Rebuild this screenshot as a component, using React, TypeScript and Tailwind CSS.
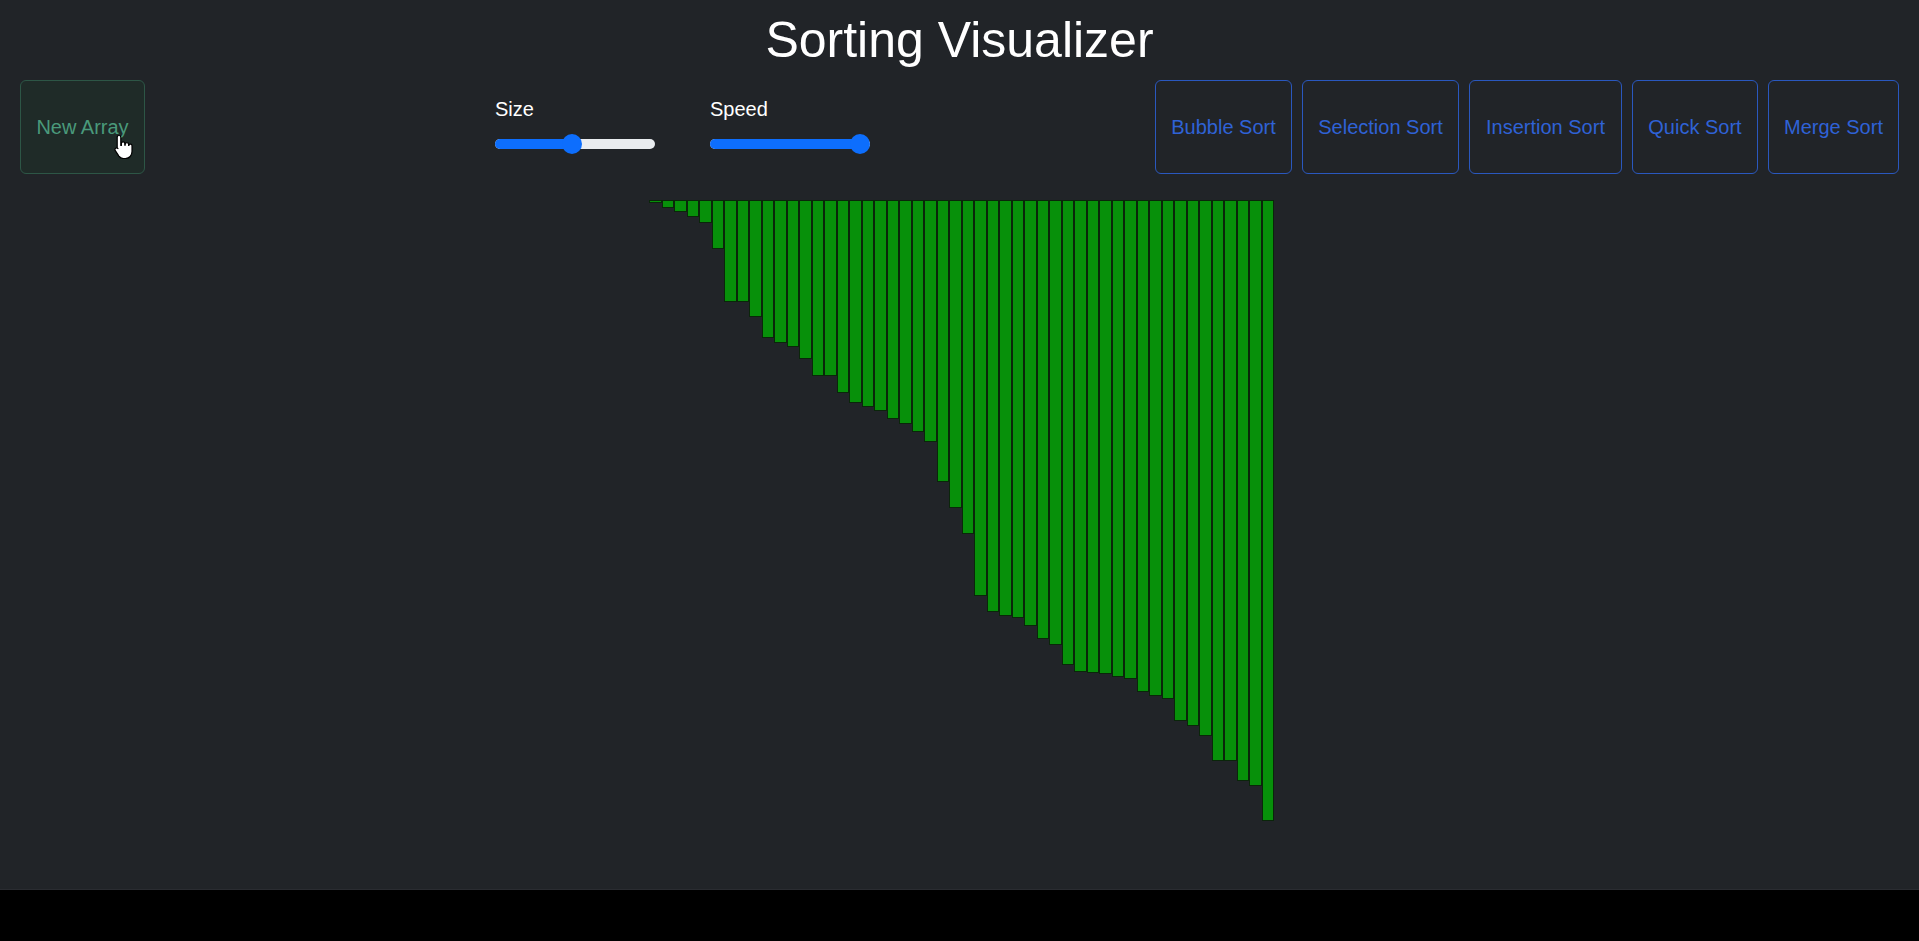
import React from "react";

const heights = [
  3, 8, 12, 17, 23, 49, 102, 102, 117, 138, 143, 147, 159, 176, 176, 193, 203,
  207, 211, 219, 224, 232, 242, 282, 308, 334, 396, 412, 416, 418, 426, 439,
  445, 465, 472, 473, 474, 477, 479, 492, 496, 499, 521, 526, 536, 561, 561,
  581, 586, 621,
];

const sorts = [
  { label: "Bubble Sort", w: "w-[137px]" },
  { label: "Selection Sort", w: "w-[157px]" },
  { label: "Insertion Sort", w: "w-[153px]" },
  { label: "Quick Sort", w: "w-[126px]" },
  { label: "Merge Sort", w: "w-[131px]" },
];

function Slider({ label, value }: { label: string; value: number }) {
  // value is 0..1, thumb travels inside the track
  const thumbLeft = 10 + value * 140;
  return (
    <div className="flex flex-col w-[160px] pt-[14px]">
      <span className="text-[20px] leading-[30px] text-white">{label}</span>
      <div className="relative h-[20px] mt-[10px]">
        <div className="absolute left-0 right-0 top-[5px] h-[10px] rounded-full bg-[#e9ecef] overflow-hidden">
          <div className="h-full bg-[#0d6efd]" style={{ width: thumbLeft }} />
        </div>
        <div
          className="absolute top-0 w-[20px] h-[20px] -ml-[10px] rounded-full bg-[#0d6efd]"
          style={{ left: thumbLeft }}
        />
      </div>
    </div>
  );
}

function HandCursor() {
  return (
    <svg
      width="20"
      height="25"
      viewBox="0 0 20 25"
      className="absolute left-[114px] top-[134px] pointer-events-none"
    >
      <path
        d="M5 1.5c1 0 1.8.8 1.8 1.8v8.2l.6-.1V9.6c0-1 .8-1.7 1.7-1.7s1.7.7 1.7 1.7v1.6h.4v-.9c0-1 .8-1.7 1.7-1.7s1.7.7 1.7 1.7v1.2h.3c0-.8.7-1.4 1.5-1.4s1.6.7 1.6 1.6v5.9c0 3.8-2.6 6.9-6.6 6.9H9.3c-2 0-3.3-.9-4.4-2.4L1.3 16.6c-.6-.8-.4-1.8.3-2.3.8-.6 1.8-.4 2.4.3l-.8-.6V3.3c0-1 .8-1.8 1.8-1.8z"
        fill="#ffffff"
        stroke="#000000"
        strokeWidth="1.2"
        strokeLinejoin="round"
      />
    </svg>
  );
}

export default function App() {
  return (
    <div
      className="h-screen bg-black overflow-hidden"
      style={{ fontFamily: '"Liberation Sans", Arial, sans-serif' }}
    >
      <div className="relative h-[890px] bg-[#212428] border-b border-[#2a2c31]">
        <h1 className="pt-[12px] text-center text-[50px] leading-[56px] text-white">
          Sorting Visualizer
        </h1>

        <div className="flex items-start mt-[12px] px-[20px] h-[94px]">
          <button className="w-[125px] h-[94px] flex items-center justify-center rounded-[6px] border border-[#2d5646] bg-[#1f2b28] text-[20px] text-[#4a9a7b]">
            New Array
          </button>

          <div className="flex gap-[55px] ml-[350px]">
            <Slider label="Size" value={0.48} />
            <Slider label="Speed" value={1} />
          </div>

          <div className="flex gap-[10px] ml-auto">
            {sorts.map((s) => (
              <button
                key={s.label}
                className={`${s.w} h-[94px] flex items-center justify-center rounded-[6px] border border-[#2a58bf] text-[20px] text-[#2f62d6]`}
              >
                {s.label}
              </button>
            ))}
          </div>
        </div>

        <div className="flex justify-center items-start mt-[26px] pl-[4px]">
          {heights.map((h, i) => (
            <div
              key={i}
              className="w-[12.5px] border-[1.5px] border-[#0a260a] bg-[#07900a]"
              style={{ height: h }}
            />
          ))}
        </div>

        <HandCursor />
      </div>
    </div>
  );
}
